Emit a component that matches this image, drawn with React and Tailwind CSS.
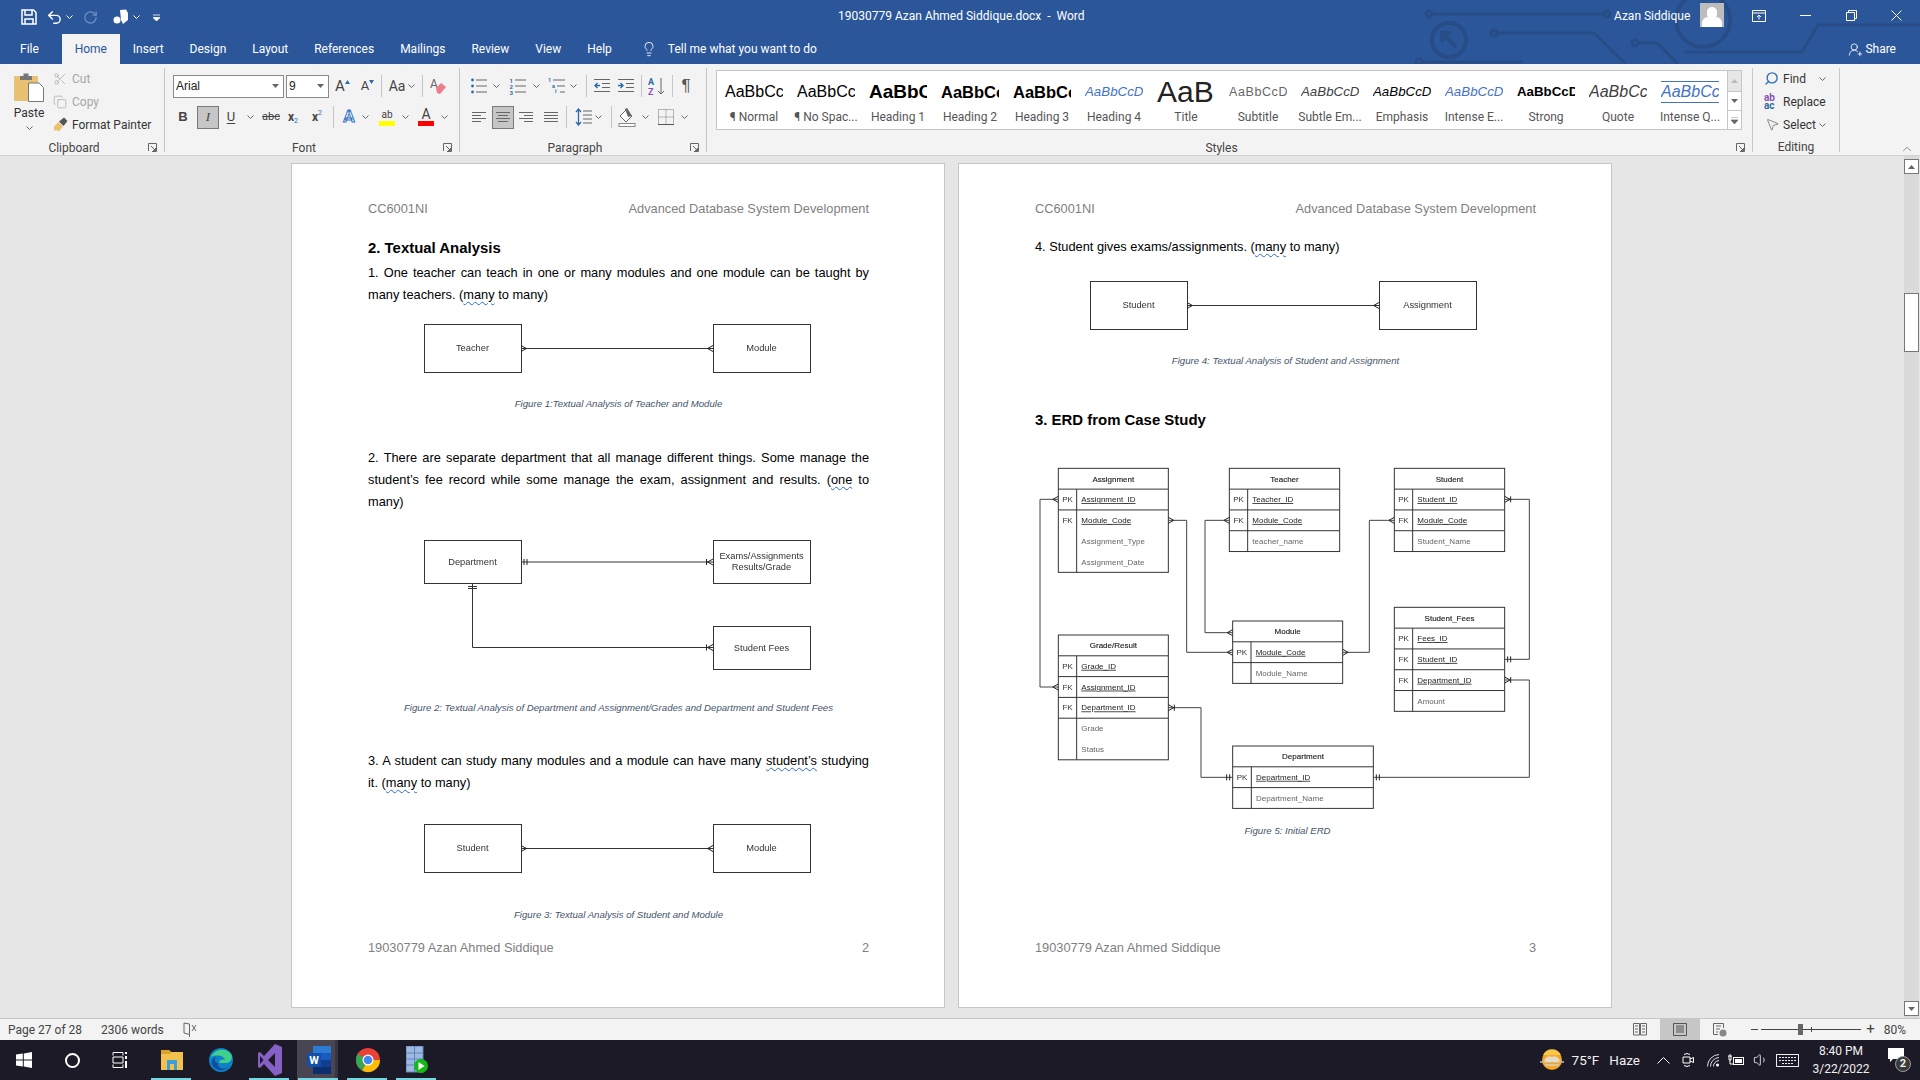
import {
  Copy,
  MousePointer2,
  RotateCw,
  Scissors,
  Search,
  Undo2,
  Lightbulb,
  UserRoundPlus,
  ChevronUp,
  Volume1,
} from "lucide-react";

const TABS = ["Insert", "Design", "Layout", "References", "Mailings", "Review", "View", "Help"];

const STYLES = [
  { label: "¶ Normal", text: "AaBbCc", cls: "text-[16px] text-black" },
  { label: "¶ No Spac...", text: "AaBbCc", cls: "text-[16px] text-black" },
  { label: "Heading 1", text: "AaBbCc", cls: "text-[19px] font-bold text-black" },
  { label: "Heading 2", text: "AaBbCc", cls: "text-[16.5px] font-bold text-black" },
  { label: "Heading 3", text: "AaBbCc", cls: "text-[16.5px] font-bold text-black" },
  { label: "Heading 4", text: "AaBbCcD", cls: "text-[13.3px] italic text-[#4472c4]" },
  { label: "Title", text: "AaB", cls: "text-[30px] text-[#222] leading-[30px]" },
  { label: "Subtitle", text: "AaBbCcD", cls: "text-[12.5px] tracking-[0.6px] text-[#666]" },
  { label: "Subtle Em...", text: "AaBbCcD", cls: "text-[13.3px] italic text-[#404040]" },
  { label: "Emphasis", text: "AaBbCcD", cls: "text-[13.3px] italic text-black" },
  { label: "Intense E...", text: "AaBbCcD", cls: "text-[13.3px] italic text-[#4472c4]" },
  { label: "Strong", text: "AaBbCcD", cls: "text-[13.3px] font-bold text-black" },
  { label: "Quote", text: "AaBbCc", cls: "text-[16px] italic text-[#404040]" },
  {
    label: "Intense Q...",
    text: "AaBbCc",
    cls: "text-[16px] italic text-[#4472c4] border-y border-[#4472c4] leading-[20px]",
  },
];

const ERD_TABLES = [
  {
    name: "Assignment", x: 55, w: 330, y: 55, col: 55,
    rows: [
      ["PK", "Assignment_ID", true],
      ["FK", "Module_Code", false],
      ["", "Assignment_Type", false],
      ["", "Assignment_Date", false],
    ],
  },
  {
    name: "Teacher", x: 568, w: 331, y: 55, col: 55,
    rows: [
      ["PK", "Teacher_ID", true],
      ["FK", "Module_Code", true],
      ["", "teacher_name", false],
    ],
  },
  {
    name: "Student", x: 1063, w: 331, y: 55, col: 55,
    rows: [
      ["PK", "Student_ID", true],
      ["FK", "Module_Code", true],
      ["", "Student_Name", false],
    ],
  },
  {
    name: "Module", x: 578, w: 330, y: 513, col: 55,
    rows: [
      ["PK", "Module_Code", true],
      ["", "Module_Name", false],
    ],
  },
  {
    name: "Student_Fees", x: 1063, w: 331, y: 472, col: 55,
    rows: [
      ["PK", "Fees_ID", true],
      ["FK", "Student_ID", true],
      ["FK", "Department_ID", true],
      ["", "Amount", false],
    ],
  },
  {
    name: "Grade/Result", x: 55, w: 330, y: 555, col: 55,
    rows: [
      ["PK", "Grade_ID", true],
      ["FK", "Assignment_ID", true],
      ["FK", "Department_ID", true],
      ["", "Grade", false],
      ["", "Status", false],
    ],
  },
  {
    name: "Department", x: 578, w: 422, y: 888, col: 56,
    rows: [
      ["PK", "Department_ID", true],
      ["", "Department_Name", false],
    ],
  },
];

const ERD_LINES = [
  "M55 148H0V711H55",
  "M385 211H440V607H578",
  "M568 211H495V548H578",
  "M1063 211H988V607H908",
  "M1394 148H1468V628H1394",
  "M1394 690H1468V982H1000",
  "M385 773H483V982H578",
];

const Chev = ({ className = "" }) => (
  <svg width="7" height="4" viewBox="0 0 7 4" className={className}>
    <path d="M.5.5 3.5 3.5 6.5.5" fill="none" stroke="#666" />
  </svg>
);

const Cell = ({ w, className = "", children }) => (
  <div className={`flex h-full items-center justify-center shrink-0 ${w} ${className}`}>{children}</div>
);

const Sep = ({ className = "" }) => <div className={`w-px h-[22px] bg-[#c6c6c6] shrink-0 ${className}`} />;

const Launcher = () => (
  <svg width="9" height="9" viewBox="0 0 9 9">
    <path d="M.5 8V.5H8.5V8.5H4M3 3 7.5 7.5M7.5 5V7.5H5" fill="none" stroke="#666" />
  </svg>
);

const Bars = ({ lines, color = "#666" }) => (
  <svg width="16" height="14" viewBox="0 0 16 14">
    {lines.map(([x, y, w], i) => (
      <rect key={i} x={x} y={y} width={w} height="1" fill={color} />
    ))}
  </svg>
);

const LEFT_BARS = [[1, 2, 14], [1, 5, 9], [1, 8, 14], [1, 11, 9]];
const CENTER_BARS = [[1, 2, 14], [3, 5, 10], [1, 8, 14], [3, 11, 10]];
const RIGHT_BARS = [[1, 2, 14], [6, 5, 9], [1, 8, 14], [6, 11, 9]];
const FULL_BARS = [[1, 2, 14], [1, 5, 14], [1, 8, 14], [1, 11, 14]];

function BulletIcon({ kind }) {
  return (
    <svg width="18" height="18" viewBox="0 0 18 18">
      {kind === "bullet" && [3, 9, 15].map((y) => <circle key={y} cx="2.5" cy={y} r="1.4" fill="#2b6ca8" />)}
      {kind === "number" &&
        [3, 9, 15].map((y, i) => (
          <text key={y} x="0.5" y={y + 2.5} fontSize="6" fontWeight="700" fill="#2b6ca8" fontFamily="Roboto">
            {i + 1}
          </text>
        ))}
      {kind === "multi" && (
        <>
          <text x="0" y="5" fontSize="5.5" fontWeight="700" fill="#2b6ca8" fontFamily="Roboto">1</text>
          <text x="4" y="10.5" fontSize="5.5" fontWeight="700" fill="#2b6ca8" fontFamily="Roboto">a</text>
          <text x="7" y="16" fontSize="5.5" fontWeight="700" fill="#2b6ca8" fontFamily="Roboto">i</text>
        </>
      )}
      <path d={kind === "multi" ? "M5 3H17M9 9H17M12 15H17" : "M6 3H17M6 9H17M6 15H17"} stroke="#666" />
    </svg>
  );
}

const IndentIcon = ({ dir }) => (
  <svg width="18" height="16" viewBox="0 0 18 16">
    <path d="M1 1.5H17M9 5.5H17M9 9.5H17M1 13.5H17" stroke="#666" />
    <path d={dir === "out" ? "M7 7.5H2M4.5 5 2 7.5 4.5 10" : "M1 7.5H6M3.5 5 6 7.5 3.5 10"} stroke="#2b6ca8" strokeWidth="1.4" fill="none" />
  </svg>
);

const GroupLabel = ({ children, launcher = true }) => (
  <div className="h-[15px] -mb-[3px] flex items-center text-[12px] leading-[14px] text-[#444]">
    <span className="flex-1 text-center">{children}</span>
    <span className="w-4 flex justify-start">{launcher && <Launcher />}</span>
  </div>
);

function ClipboardGroup() {
  return (
    <div className="w-[165px] h-full border-r border-[#c6c6c6] flex flex-col shrink-0">
      <div className="flex flex-1 -mt-px">
        <div className="w-[53px] flex flex-col items-center pl-[5px] pt-[4px]">
          <svg width="30" height="31" viewBox="0 0 30 31">
            <rect x="0" y="5" width="24" height="25" rx="1" fill="#e9c173" />
            <path d="M6 5H9.5V2.5H14.5V5H18V9H6Z" fill="#767676" />
            <path d="M14.5 12H25L29.5 16.5V30.500H14.5Z" fill="#fff" stroke="#777" />
          </svg>
          <span className="mt-[4px] text-[12px] leading-[14px] text-[#333]">Paste</span>
          <Chev className="mt-[6px]" />
        </div>
        <div className="flex flex-col text-[12px]">
          <div className="h-[23px] flex items-center gap-[5px] text-[#a6a6a6]">
            <Scissors size={14} strokeWidth={1.3} color="#aaa" />
            <span>Cut</span>
          </div>
          <div className="h-[23px] flex items-center gap-[5px] text-[#a6a6a6]">
            <Copy size={14} strokeWidth={1.3} color="#aaa" />
            <span>Copy</span>
          </div>
          <div className="h-[23px] flex items-center gap-[4px] text-[#333]">
            <svg width="15" height="15" viewBox="0 0 15 15">
              <path d="M1 9.5 5.5 5 10 9.5 6 14.5 3 13 1 14Z" fill="#e9c173" />
              <path d="M6 4.5 11 .5 14.5 4 10.5 9Z" fill="#555" />
            </svg>
            <span>Format Painter</span>
          </div>
        </div>
      </div>
      <GroupLabel>Clipboard</GroupLabel>
    </div>
  );
}

function FontGroup() {
  return (
    <div className="w-[295px] h-full border-r border-[#c6c6c6] flex flex-col shrink-0">
      <div className="h-6 mt-[6px] flex items-center pl-2">
        <div className="w-[111px] h-[23px] bg-white border border-[#8a8a8a] flex items-center justify-between pl-[2px] pr-[4px] text-[12px] text-[#222] font-['Liberation_Sans',sans-serif]">
          Arial
          <svg width="7" height="4"><path d="M0 0H7L3.5 4Z" fill="#666" /></svg>
        </div>
        <div className="w-[43px] h-[23px] ml-[2px] bg-white border border-[#8a8a8a] flex items-center justify-between pl-[2px] pr-[4px] text-[12px] text-[#222] font-['Liberation_Sans',sans-serif]">
          9
          <svg width="7" height="4"><path d="M0 0H7L3.5 4Z" fill="#666" /></svg>
        </div>
        <Cell w="w-[25px] ml-[1px]">
          <span className="text-[15px] text-[#444]">A</span>
          <svg width="5" height="4" className="mb-2"><path d="M0 4H5L2.5 0Z" fill="#2b6ca8" /></svg>
        </Cell>
        <Cell w="w-[25px]">
          <span className="text-[13px] text-[#444]">A</span>
          <svg width="5" height="4" className="mb-2"><path d="M0 0H5L2.5 4Z" fill="#2b6ca8" /></svg>
        </Cell>
        <Sep className="ml-[1px]" />
        <Cell w="w-[32px] ml-[4px] gap-[3px]">
          <span className="text-[14px] text-[#444]">Aa</span>
          <Chev />
        </Cell>
        <Sep className="ml-[4px]" />
        <Cell w="w-6 ml-[3px]">
          <svg width="17" height="18" viewBox="0 0 17 18">
            <text x="0" y="11" fontSize="12" fill="#666" fontFamily="Roboto">A</text>
            <path d="M6 11 11 6 16 10 10 17 7 16Z" fill="#ee7d8c" />
          </svg>
        </Cell>
      </div>
      <div className="h-6 mt-[7px] flex items-center pl-2 text-[#444]">
        <Cell w="w-5"><span className="text-[13px] font-bold font-['Liberation_Sans',sans-serif]">B</span></Cell>
        <div className="ml-[4px] w-[22px] h-[23px] bg-[#c6c6c6] border border-[#7a7a7a] flex items-center justify-center text-[13px] italic font-['Liberation_Serif',serif]">
          I
        </div>
        <Cell w="w-[18px] ml-[3px]"><span className="text-[13px] underline underline-offset-2">U</span></Cell>
        <Cell w="w-5"><Chev /></Cell>
        <Cell w="w-[22px]"><span className="text-[11px] line-through">abc</span></Cell>
        <Cell w="w-[22px]">
          <span className="text-[12px] font-bold">x</span>
          <span className="text-[7px] text-[#2b6ca8] mt-2">2</span>
        </Cell>
        <Cell w="w-[22px] ml-[2px]">
          <span className="text-[12px] font-bold">x</span>
          <span className="text-[7px] text-[#2b6ca8] mb-2">2</span>
        </Cell>
        <Sep className="ml-[5px]" />
        <Cell w="w-6 ml-[3px]">
          <span className="text-[17px] font-bold text-white [-webkit-text-stroke:1px_#3b78c4]">A</span>
        </Cell>
        <Cell w="w-2"><Chev /></Cell>
        <Cell w="w-6 ml-[6px] flex-col">
          <span className="text-[10px] leading-[12px] text-[#444]">ab</span>
          <div className="w-4 h-[5px] bg-[#ffff00]" />
        </Cell>
        <Cell w="w-3"><Chev /></Cell>
        <Cell w="w-6 ml-[3px] flex-col">
          <span className="text-[14px] leading-[13px] text-[#444]">A</span>
          <div className="w-4 h-[5px] bg-[#ff0000]" />
        </Cell>
        <Cell w="w-3"><Chev /></Cell>
      </div>
      <div className="mt-auto"><GroupLabel>Font</GroupLabel></div>
    </div>
  );
}

function ParagraphGroup() {
  return (
    <div className="w-[247px] h-full border-r border-[#c6c6c6] flex flex-col shrink-0">
      <div className="h-6 mt-[6px] flex items-center pl-[9px]">
        <Cell w="w-5"><BulletIcon kind="bullet" /></Cell>
        <Cell w="w-[14px]"><Chev /></Cell>
        <Cell w="w-5 ml-[5px]"><BulletIcon kind="number" /></Cell>
        <Cell w="w-4"><Chev /></Cell>
        <Cell w="w-5 ml-[3px]"><BulletIcon kind="multi" /></Cell>
        <Cell w="w-3"><Chev /></Cell>
        <Sep className="ml-[7px]" />
        <Cell w="w-5 ml-[5px]"><IndentIcon dir="out" /></Cell>
        <Cell w="w-5 ml-1"><IndentIcon dir="in" /></Cell>
        <Sep className="ml-[5px]" />
        <Cell w="w-5 ml-[5px]">
          <svg width="18" height="20" viewBox="0 0 18 20">
            <text x="0" y="9" fontSize="9" fontWeight="700" fill="#2b6ca8" fontFamily="Roboto">A</text>
            <text x="0" y="19" fontSize="9" fontWeight="700" fill="#8a4fb5" fontFamily="Roboto">Z</text>
            <path d="M13 2V18M10 15 13 18 16 15" stroke="#666" fill="none" />
          </svg>
        </Cell>
        <Sep className="ml-[5px]" />
        <Cell w="w-5 ml-[3px]"><span className="text-[17px] text-[#555] font-['Liberation_Sans',sans-serif]">¶</span></Cell>
      </div>
      <div className="h-6 mt-[7px] flex items-center pl-[9px]">
        <Cell w="w-5"><Bars lines={LEFT_BARS} /></Cell>
        <div className="ml-[3px] w-[22px] h-[23px] bg-[#c6c6c6] border border-[#7a7a7a] flex items-center justify-center">
          <Bars lines={CENTER_BARS} />
        </div>
        <Cell w="w-5 ml-[2px]"><Bars lines={RIGHT_BARS} /></Cell>
        <Cell w="w-5 ml-[5px]"><Bars lines={FULL_BARS} /></Cell>
        <Sep className="ml-[5px]" />
        <Cell w="w-5 ml-[7px]">
          <svg width="18" height="18" viewBox="0 0 18 18">
            <path d="M8 3H17M8 7H17M8 11H17M8 15H17" stroke="#666" />
            <path d="M3.5 1V17M1 4 3.5 1 6 4M1 14 3.5 17 6 14" stroke="#2b6ca8" fill="none" strokeWidth="1.3" />
          </svg>
        </Cell>
        <Cell w="w-2"><Chev /></Cell>
        <Sep className="ml-[9px]" />
        <Cell w="w-5 ml-[5px]">
          <svg width="18" height="19" viewBox="0 0 18 19">
            <path d="M2 8 8 2 14 8 8 14Z" fill="#fff" stroke="#666" />
            <path d="M7 1 9 0 11 3 14 8 10 9Z" fill="#666" />
            <rect x="1" y="15.5" width="16" height="3" fill="#fff" stroke="#888" />
          </svg>
        </Cell>
        <Cell w="w-4"><Chev /></Cell>
        <Cell w="w-5 ml-[3px]">
          <svg width="16" height="16" viewBox="0 0 16 16">
            <path d="M.5.5H15.5V15.500H.5ZM8 .5V15.500M.5 8H15.500" fill="none" stroke="#777" strokeDasharray="1 1" />
            <path d="M0 15.500H16" stroke="#555" />
          </svg>
        </Cell>
        <Cell w="w-4"><Chev /></Cell>
      </div>
      <div className="mt-auto"><GroupLabel>Paragraph</GroupLabel></div>
    </div>
  );
}

function StylesGroup() {
  return (
    <div className="w-[1046px] h-full border-r border-[#c6c6c6] flex flex-col shrink-0">
      <div className="ml-[9px] mt-[2px] w-[1026px] h-[60px] bg-white border border-[#c6c6c6] flex">
        <div className="flex flex-1 pl-px">
          {STYLES.map((s) => (
            <div key={s.label} className="w-[72px] shrink-0 flex flex-col items-center">
              <div className="mt-[3px] h-[36px] w-[58px] overflow-hidden flex items-center justify-start">
                <span className={`shrink-0 whitespace-nowrap font-['Liberation_Sans',sans-serif] ${s.cls}`}>{s.text}</span>
              </div>
              <span className="text-[12px] leading-[14px] text-[#555] whitespace-nowrap">{s.label}</span>
            </div>
          ))}
        </div>
        <div className="w-[14px] flex flex-col border-l border-[#c6c6c6]">
          <div className="h-[21px] bg-[#e6e6e6] flex items-center justify-center border-b border-[#c6c6c6]">
            <svg width="7" height="4"><path d="M0 4H7L3.5 0Z" fill="#bbb" /></svg>
          </div>
          <div className="h-[19px] flex items-center justify-center border-b border-[#c6c6c6]">
            <svg width="7" height="4"><path d="M0 0H7L3.5 4Z" fill="#666" /></svg>
          </div>
          <div className="flex-1 flex items-center justify-center">
            <svg width="7" height="7"><path d="M0 0H7M0 3H7L3.5 7Z" stroke="#666" fill="#666" strokeWidth=".7" /></svg>
          </div>
        </div>
      </div>
      <div className="mt-auto"><GroupLabel>Styles</GroupLabel></div>
    </div>
  );
}

function EditingGroup() {
  return (
    <div className="w-[87px] h-full border-r border-[#c6c6c6] flex flex-col shrink-0 text-[12px] text-[#333]">
      <div className="flex-1 -mt-px pl-[11px]">
        <div className="h-[23px] flex items-center gap-[4px]">
          <Search size={15} strokeWidth={2.2} color="#2f6fb5" className="-scale-x-100" />
          <span>Find</span>
          <Chev className="ml-[9px]" />
        </div>
        <div className="h-[23px] flex items-center gap-[3px]">
          <span className="w-4 text-[10px] leading-[8px] font-bold text-[#2b6ca8]">
            <span className="text-[#8a4fb5]">ab</span>
            <br />
            ac
          </span>
          <span>Replace</span>
        </div>
        <div className="h-[23px] flex items-center gap-[3px]">
          <MousePointer2 size={15} strokeWidth={1.2} color="#666" className="ml-px" />
          <span>Select</span>
          <Chev />
        </div>
      </div>
      <div className="h-[15px] -mb-[3px] text-center leading-[14px] text-[#444]">Editing</div>
    </div>
  );
}

function TitleBar() {
  return (
    <div className="relative h-16 bg-[#2b579a] text-white overflow-hidden shrink-0">
      {/* circuit pattern behind the right end of the title bar */}
      <svg className="absolute inset-0" width="1920" height="64" viewBox="0 0 1920 64">
        <g fill="none" stroke="#274c86" strokeWidth="3">
          <path d="M1432 14H1604M1497 33H1594L1626 64M1638 43H1657L1678 64M1684 52H1802L1818 25H1920M1422 62H1523" />
          <circle cx="1429" cy="14" r="3" />
          <circle cx="1607" cy="14" r="3" />
          <circle cx="1494" cy="33" r="3" />
          <circle cx="1635" cy="43" r="3" />
          <circle cx="1419" cy="62" r="3" />
          <circle cx="1449" cy="40" r="17" strokeWidth="4" />
          <circle cx="1703" cy="20" r="27" strokeWidth="4" />
          <path d="M1442 33 1456 47M1442 42V33H1451" strokeWidth="4" />
        </g>
      </svg>
      <div className="relative h-[34px] flex items-center">
        <div className="pl-[21px] flex items-center">
          <svg width="16" height="16" viewBox="0 0 16 16" className="mr-[5px]">
            <path d="M1 1H12.5L15 3.5V15H1ZM4 1V6H11V1M4 15V10H12V15" fill="none" stroke="#fff" strokeWidth="1.5" />
          </svg>
          <Undo2 size={17} className="ml-[4px]" />
          <Chev className="ml-[3px] [&_path]:stroke-white" />
          <RotateCw size={15} color="#6f8fbf" className="ml-[10px]" />
          <svg width="16" height="16" viewBox="0 0 16 16" className="ml-[15px]">
            <path d="M7 1 13 .5 15 4V11L10 15 8 11Z" fill="#fff" />
            <circle cx="4" cy="11" r="3.5" fill="#fff" />
          </svg>
          <Chev className="ml-[4px] [&_path]:stroke-white" />
          <svg width="7" height="7" viewBox="0 0 7 7" className="ml-[13px]">
            <path d="M0 1H7M0 3.5H7L3.5 7Z" stroke="#fff" fill="#fff" strokeWidth=".8" />
          </svg>
        </div>
        <span className="absolute left-[838px] top-[8px] text-[12px] leading-4 whitespace-pre">
          19030779 Azan Ahmed Siddique.docx  -  Word
        </span>
        <span className="absolute left-[1614px] top-[8px] text-[12px] leading-4">Azan Siddique</span>
        <div className="absolute left-[1700px] top-[3px] w-6 h-6 bg-[#bdbdbd] flex flex-col items-center justify-end overflow-hidden">
          <div className="w-[10px] h-[12px] rounded-full bg-white mb-[-2px]" />
          <div className="w-[20px] h-[10px] rounded-t-md bg-white" />
        </div>
        <svg width="14" height="12" viewBox="0 0 14 12" className="absolute left-[1752px] top-[10px]">
          <path d="M.5.5H13.5V11.5H.5ZM.5 3H13.5M7 9.5V5M5 7 7 5 9 7" fill="none" stroke="#fff" />
        </svg>
        <div className="absolute left-[1800px] top-[15px] w-[11px] h-px bg-white" />
        <svg width="11" height="11" viewBox="0 0 11 11" className="absolute left-[1846px] top-[10px]">
          <path d="M.5 2.5H8.5V10.5H.5ZM2.5 2.5V.5H10.5V8.5H8.5" fill="none" stroke="#fff" />
        </svg>
        <svg width="11" height="11" viewBox="0 0 11 11" className="absolute left-[1891px] top-[10px]">
          <path d="M.5.5 10.5 10.5M10.5.5 .5 10.5" fill="none" stroke="#fff" />
        </svg>
      </div>
      <div className="relative h-[30px] flex items-center text-[12px]">
        <span className="ml-[20px] mr-[23px] leading-[30px]">File</span>
        <span className="w-[58px] h-[30px] bg-[#f3f3f3] text-[#2b579a] flex items-center justify-center">Home</span>
        {TABS.map((t) => (
          <span key={t} className="px-[13px]">{t}</span>
        ))}
        <Lightbulb size={16} strokeWidth={1.3} className="ml-[16px]" />
        <span className="ml-[11px]">Tell me what you want to do</span>
        <div className="ml-auto mr-[24px] flex items-center gap-[2px]">
          <UserRoundPlus size={15} strokeWidth={1.3} />
          <span>Share</span>
        </div>
      </div>
    </div>
  );
}

function Ribbon() {
  return (
    <div className="relative h-[92px] bg-[#f3f3f3] border-b border-[#d2d2d2] flex shrink-0 pt-1 pb-[3px]">
      <ClipboardGroup />
      <FontGroup />
      <ParagraphGroup />
      <StylesGroup />
      <EditingGroup />
      <ChevronUp size={14} strokeWidth={1} color="#444" className="absolute left-[1900px] top-[78px]" />
    </div>
  );
}

// --- document pages ---

const Crow = ({ x, y, d, s = 1 }) => (
  <path d={`M${x} ${y - 3 * s}L${x + 5.5 * d * s} ${y}L${x} ${y + 3 * s}`} fill="none" stroke="#222" strokeWidth={s} />
);

const Tick = ({ x, y, d, at, s = 1 }) => (
  <path d={`M${x + at * d * s} ${y - 3 * s}V${y + 3 * s}`} stroke="#222" strokeWidth={s} />
);

const OneBar = ({ x, y, d, s = 1 }) => (
  <>
    <Tick x={x} y={y} d={d} at={3} s={s} />
    <Tick x={x} y={y} d={d} at={6} s={s} />
  </>
);

function DiagramBox({ x, y, w = 97, h = 48, lines }) {
  return (
    <g>
      <rect x={x + 0.5} y={y + 0.5} width={w} height={h} fill="#fff" stroke="#333" />
      {lines.map((t, i) => (
        <text
          key={t}
          x={x + w / 2}
          y={y + h / 2 + 3 - (lines.length - 1) * 5.5 + i * 11}
          fontSize="9.3"
          textAnchor="middle"
          fill="#333"
        >
          {t}
        </text>
      ))}
    </g>
  );
}

function SimpleDiagram({ left, right, x1, x2, y = 9, className }) {
  const w = x2 - x1 - 97;
  return (
    <svg width="501" height="65" viewBox="0 0 501 65" className={`blur-[0.3px] font-['Liberation_Sans',sans-serif] ${className}`}>
      <DiagramBox x={x1} y={y} lines={[left]} />
      <DiagramBox x={x2} y={y} lines={[right]} />
      <path d={`M${x1 + 97} ${y + 24.5}H${x1 + 97 + w}`} stroke="#333" />
      <Crow x={x1 + 97} y={y + 24.5} d={1} />
      <Crow x={x2} y={y + 24.5} d={-1} />
    </svg>
  );
}

function DepartmentDiagram() {
  return (
    <svg width="501" height="150" viewBox="0 0 501 150" className="mt-[17px] blur-[0.3px] font-['Liberation_Sans',sans-serif]">
      <DiagramBox x={56} y={10} h={43} lines={["Department"]} />
      <DiagramBox x={345} y={10} h={43} lines={["Exams/Assignments", "Results/Grade"]} />
      <DiagramBox x={345} y={96} h={43} lines={["Student Fees"]} />
      <path d="M153 32H345M104.500 53V117.500H345" fill="none" stroke="#333" />
      <OneBar x={153} y={32} d={1} />
      <Crow x={345} y={32} d={-1} />
      <Tick x={345} y={32} d={-1} at={6.5} />
      <Crow x={345} y={117.5} d={-1} />
      <Tick x={345} y={117.5} d={-1} at={6.5} />
      <path d="M100 56.500H109M100 58.500H109" stroke="#333" />
    </svg>
  );
}

function ErdTable({ t }) {
  const rowH = 62.4;
  const total = rowH * (t.rows.length + 1);
  return (
    <g>
      <rect x={t.x} y={t.y} width={t.w} height={total} fill="#fff" stroke="#333" strokeWidth="3" />
      <text x={t.x + t.w / 2} y={t.y + 40} fontSize="24" textAnchor="middle" fill="#222" stroke="#222" strokeWidth=".4">
        {t.name}
      </text>
      <path d={`M${t.x + t.col} ${t.y + rowH}V${t.y + total}`} stroke="#333" strokeWidth="3" />
      {t.rows.map(([key, name, line], i) => {
        const top = t.y + rowH * (i + 1);
        const keyed = key !== "";
        return (
          <g key={name}>
            {(i === 0 || t.rows[i - 1][2]) && <path d={`M${t.x} ${top}H${t.x + t.w}`} stroke="#333" strokeWidth="3" />}
            <text x={t.x + t.col / 2} y={top + 39} fontSize="24" textAnchor="middle" fill="#333">
              {key}
            </text>
            <text
              x={t.x + t.col + 14}
              y={top + 39}
              fontSize="24"
              fill={keyed ? "#222" : "#666"}
              textDecoration={keyed ? "underline" : "none"}
            >
              {name}
            </text>
          </g>
        );
      })}
    </g>
  );
}

function Erd() {
  return (
    <svg
      width="500"
      height="365"
      viewBox="-3 0 1500 1095"
      className="mt-5 ml-1 blur-[0.3px] font-['Liberation_Sans',sans-serif]"
    >
      {ERD_LINES.map((d) => (
        <path key={d} d={d} fill="none" stroke="#444" strokeWidth="3" />
      ))}
      {ERD_TABLES.map((t) => (
        <ErdTable key={t.name} t={t} />
      ))}
      <Crow x={55} y={148} d={-1} s={3} />
      <Crow x={55} y={711} d={-1} s={3} />
      <Crow x={385} y={211} d={1} s={3} />
      <Crow x={578} y={607} d={-1} s={3} />
      <Crow x={568} y={211} d={-1} s={3} />
      <Crow x={578} y={548} d={-1} s={3} />
      <Crow x={1063} y={211} d={-1} s={3} />
      <Crow x={908} y={607} d={1} s={3} />
      <Crow x={1394} y={148} d={1} s={3} />
      <Tick x={1394} y={148} d={1} at={6} s={3} />
      <OneBar x={1394} y={628} d={1} s={3} />
      <Crow x={1394} y={690} d={1} s={3} />
      <Tick x={1394} y={690} d={1} at={6} s={3} />
      <OneBar x={1000} y={982} d={1} s={3} />
      <Crow x={385} y={773} d={1} s={3} />
      <Tick x={385} y={773} d={1} at={6} s={3} />
      <OneBar x={578} y={982} d={-1} s={3} />
    </svg>
  );
}

const Caption = ({ className = "", children }) => (
  <p className={`text-center text-[9.65px] leading-[14px] italic text-[#44546a] ${className}`}>{children}</p>
);

const Squiggle = ({ children }) => (
  <span className="underline decoration-wavy decoration-[#2b6cd4] decoration-1 underline-offset-2">{children}</span>
);

const Para = ({ className = "", children }) => (
  <p className={`text-[12.8px] leading-[22px] text-justify text-black ${className}`}>{children}</p>
);

function Page({ number, children }) {
  return (
    <div className="w-[654px] h-[845px] bg-white border border-[#c6c6c6] pl-[76px] pr-[75px] pt-[37px] shrink-0 font-['Liberation_Sans',sans-serif]">
      <div className="flex justify-between h-4 text-[12.8px] leading-4 text-[#7f7f7f]">
        <span>CC6001NI</span>
        <span>Advanced Database System Development</span>
      </div>
      <div className="h-[723px] flow-root">{children}</div>
      <div className="flex justify-between h-4 text-[12.8px] leading-4 text-[#7f7f7f]">
        <span>19030779 Azan Ahmed Siddique</span>
        <span>{number}</span>
      </div>
    </div>
  );
}

function Scrollbar() {
  return (
    <div className="ml-auto mr-px w-[15px] h-full bg-[#dadada] flex flex-col">
      <div className="mt-[3px] h-[15px] bg-white border border-[#777] flex items-center justify-center">
        <svg width="7" height="4"><path d="M0 4H7L3.5 0Z" fill="#666" /></svg>
      </div>
      <div className="mt-[119px] h-[59px] bg-white border border-[#777]" />
      <div className="mt-auto mb-[2px] h-[15px] bg-white border border-[#777] flex items-center justify-center">
        <svg width="7" height="4"><path d="M0 0H7L3.5 4Z" fill="#666" /></svg>
      </div>
    </div>
  );
}

function Document() {
  return (
    <div className="flex-1 min-h-0 bg-[#e6e6e6] flex pl-[291px] overflow-hidden">
      <div className="pt-[7px] flex gap-[13px]">
        <Page number="2">
          <h2 className="mt-[21px] text-[14.93px] leading-5 font-bold text-black">2. Textual Analysis</h2>
          <Para className="mt-[4px]">
            1. One teacher can teach in one or many modules and one module can be taught by many teachers.{" "}
            (<Squiggle>many</Squiggle> to many)
          </Para>
          <SimpleDiagram left="Teacher" right="Module" x1={56} x2={345} y={9} className="mt-[9px]" />
          <Caption className="mt-[17px]">Figure 1:Textual Analysis of Teacher and Module</Caption>
          <Para className="mt-[36px]">
            2. There are separate department that all manage different things. Some manage the student’s fee record
            while some manage the exam, assignment and results. (<Squiggle>one</Squiggle> to many)
          </Para>
          <DepartmentDiagram />
          <Caption className="mt-[21px]">
            Figure 2: Textual Analysis of Department and Assignment/Grades and Department and Student Fees
          </Caption>
          <Para className="mt-[35px]">
            3. A student can study many modules and a module can have many <Squiggle>student’s</Squiggle> studying it.{" "}
            (<Squiggle>many</Squiggle> to many)
          </Para>
          <SimpleDiagram left="Student" right="Module" x1={56} x2={345} y={9} className="mt-[21px]" />
          <Caption className="mt-[28px]">Figure 3: Textual Analysis of Student and Module</Caption>
        </Page>
        <Page number="3">
          <Para className="mt-[19px]">
            4. Student gives exams/assignments. (<Squiggle>many</Squiggle> to many)
          </Para>
          <SimpleDiagram left="Student" right="Assignment" x1={55} x2={344} y={11} className="mt-3" />
          <Caption className="mt-[19px]">Figure 4: Textual Analysis of Student and Assignment</Caption>
          <h2 className="mt-[42px] text-[14.93px] leading-5 font-bold text-black">3. ERD from Case Study</h2>
          <Erd />
          <Caption className="mt-[9px] ml-[4px]">Figure 5: Initial ERD</Caption>
        </Page>
      </div>
      <Scrollbar />
    </div>
  );
}

function StatusBar() {
  return (
    <div className="h-[22px] bg-[#f3f3f3] border-t border-[#c6c6c6] flex items-center text-[12px] text-[#444] shrink-0">
      <span className="ml-2">Page 27 of 28</span>
      <span className="ml-[19px]">2306 words</span>
      <svg width="14" height="15" viewBox="0 0 14 15" className="ml-[19px]">
        <path d="M6.500 2 1 1V11L6.500 12.500V2ZM6.500 12.500V15" fill="none" stroke="#666" />
        <path d="M9 3 13 9M13 3 9 9" stroke="#666" />
      </svg>
      <div className="ml-auto flex h-full items-center">
        <svg width="14" height="13" viewBox="0 0 14 13" className="mr-[13px]">
          <path d="M.5.5H6.500V12H.5ZM7.500.5H13.500V12H7.500ZM2 3H5M2 6H5M2 9H5M9 3H12M9 6H12M9 9H12" fill="none" stroke="#666" />
        </svg>
        <div className="w-10 h-full bg-[#c6c6c6] flex items-center justify-center">
          <svg width="14" height="13" viewBox="0 0 14 13">
            <path d="M.5.5H13.500V12.500H.5ZM3 3H11M3 5H11M3 7H11M3 9H11" fill="none" stroke="#555" />
          </svg>
        </div>
        <svg width="14" height="14" viewBox="0 0 14 14" className="ml-[13px]">
          <path d="M.5.5H10.500V5M.5.5V11.500H5M3 3H8M3 6H7M3 9H5" fill="none" stroke="#666" />
          <circle cx="10" cy="10" r="3.500" fill="#888" />
        </svg>
        <div className="ml-[24px] w-[7px] h-px bg-[#444]" />
        <div className="relative ml-[3px] w-[100px] h-px bg-[#444]">
          <div className="absolute left-[37px] -top-[5px] w-[5px] h-[11px] bg-[#666]" />
          <div className="absolute left-[50px] -top-[2px] w-px h-[5px] bg-[#444]" />
        </div>
        <span className="ml-[5px] text-[15px] leading-none">+</span>
        <span className="ml-[9px] mr-[14px]">80%</span>
      </div>
    </div>
  );
}

const TaskIcon = ({ active, running, children }) => (
  <div className="relative w-[49px] h-full flex items-center justify-center">
    {active && <div className="absolute inset-y-0 left-[3px] right-[5px] bg-[#4a4552] border-r-[3px] border-[#3a3542]" />}
    <div className="relative">{children}</div>
    {running && <div className="absolute bottom-0 left-[4px] right-[5px] h-[2px] bg-[#76d7e0]" />}
  </div>
);

function Taskbar() {
  return (
    <div className="h-10 bg-[#1d1a27] flex items-center text-white shrink-0">
      <div className="w-[48px] h-full flex items-center justify-center">
        <svg width="16" height="16" viewBox="0 0 16 16">
          <path d="M0 2.500 6.800 1.500V7.500H0ZM7.800 1.400 16 0V7.500H7.800ZM0 8.500H6.800V14.500L0 13.500ZM7.800 8.500H16V16L7.800 14.600Z" fill="#fff" />
        </svg>
      </div>
      <div className="w-[48px] h-full flex items-center justify-center">
        <div className="w-[15px] h-[15px] rounded-full border-2 border-white" />
      </div>
      <div className="w-[48px] h-full flex items-center justify-center">
        <svg width="16" height="16" viewBox="0 0 16 16">
          <path d="M1 3.500V.5H11V3.500M1 12.500V15.500H11V12.500M1 5H11V11H1Z" fill="none" stroke="#fff" />
          <rect x="13" y="4" width="2" height="3" fill="#fff" />
          <rect x="13" y="0" width="2" height="2" fill="#fff" />
          <rect x="13" y="9" width="2" height="7" fill="#fff" />
        </svg>
      </div>
      <div className="ml-[3px] flex h-full">
        <TaskIcon running>
          <svg width="22" height="22" viewBox="0 0 22 22">
            <path d="M0 1H8L10 3H22V21H0Z" fill="#f2c14e" />
            <path d="M0 1H8L10 3V5H0Z" fill="#d9a22f" />
            <path d="M6 11H16V21H13V15H9V21H6Z" fill="#3aa0dc" />
          </svg>
        </TaskIcon>
        <TaskIcon>
          <svg width="24" height="24" viewBox="0 0 24 24">
            <circle cx="12" cy="12" r="12" fill="#0f7fc8" />
            <path d="M2 9C5 1 17-1 22 6 24 10 22 15 17 15H10C10 11 15 11 16 12 15 8 9 6 2 9Z" fill="#3fd18a" />
            <path d="M9 15C8 19 13 23 20 19 15 24 5 23 3 16 2 13 4 10 7 9 5 12 6 15 9 15Z" fill="#0b4f9e" />
          </svg>
        </TaskIcon>
        <TaskIcon running>
          <svg width="24" height="32" viewBox="0 0 24 32">
            <path d="M17 0 24 3V29L17 32 6 20 2 24 0 23V9L2 8 6 12Z" fill="#8661c5" />
            <path d="M17 9V23L10 16ZM2 12V20L5.500 16Z" fill="#1d1a27" />
          </svg>
        </TaskIcon>
        <TaskIcon active running>
          <svg width="24" height="28" viewBox="0 0 24 28">
            <rect x="6" y="0" width="18" height="28" rx="1" fill="#2b7cd3" />
            <rect x="6" y="7" width="18" height="7" fill="#185abd" />
            <rect x="6" y="14" width="18" height="7" fill="#103f91" />
            <rect x="6" y="21" width="18" height="7" fill="#0b2e6f" />
            <rect x="0" y="7" width="14" height="14" rx="1" fill="#124fa8" />
            <text x="7" y="18" textAnchor="middle" fontSize="11" fontWeight="700" fill="#fff" fontFamily="Roboto">W</text>
          </svg>
        </TaskIcon>
        <TaskIcon running>
          <svg width="24" height="30" viewBox="0 0 24 24">
            <circle cx="12" cy="12" r="12" fill="#e94235" />
            <path d="M12 12 1.600 18A12 12 0 0 1 1.600 6Z" fill="#34a853" />
            <path d="M12 12H24A12 12 0 0 1 6 22.400Z" fill="#fbbc04" />
            <path d="M12 12 6 22.400A12 12 0 0 1 1.600 18Z" fill="#34a853" />
            <circle cx="12" cy="12" r="5.500" fill="#fff" />
            <circle cx="12" cy="12" r="4.300" fill="#4285f4" />
          </svg>
        </TaskIcon>
        <TaskIcon running>
          <svg width="22" height="28" viewBox="0 0 22 28">
            <rect x="0" y="0" width="17" height="26" fill="#9db9e0" stroke="#5c84bd" />
            <path d="M0 7H17M0 13H17M0 19H17M8.500 0V26" stroke="#5c84bd" />
            <circle cx="15" cy="20" r="7" fill="#16b916" />
            <path d="M12.500 16 18.500 20 12.500 24Z" fill="#fff" />
          </svg>
        </TaskIcon>
      </div>
      <div className="ml-auto flex h-full items-center text-[13.5px] text-[#f0f0f0]">
        <svg width="24" height="22" viewBox="0 0 24 22" className="mr-[8px]">
          <circle cx="12" cy="11" r="10" fill="#f7a823" />
          <path d="M3 6A10 10 0 0 1 21 6Z" fill="#f9c54a" />
          <path d="M0 13H24" stroke="#c9bfae" strokeWidth="1.5" />
          <path d="M5 10Q8 6 12 8 16 6 19 10 21 12 18 13H6Q3 12 5 10Z" fill="#e4dccd" />
          <path d="M5 16H19" stroke="#d8cfc0" strokeWidth="1.500" />
        </svg>
        <span>75°F</span>
        <span className="ml-[10px]">Haze</span>
        <svg width="13" height="7" viewBox="0 0 13 7" className="ml-[17px]">
          <path d="M.5 6.500 6.500.5 12.500 6.500" fill="none" stroke="#fff" />
        </svg>
        <svg width="12" height="16" viewBox="0 0 12 16" className="ml-[12px]">
          <path d="M1 5H8V11H1ZM8 7 11.500 5.500V10.500L8 9M2 2.500Q5 .5 8 2.500M2 13.500Q5 15.500 8 13.500" fill="none" stroke="#fff" />
        </svg>
        <svg width="13" height="13" viewBox="0 0 13 13" className="ml-[13px]">
          <path d="M.5 12.500A12 12 0 0 1 12 .5M3.500 12.500A9 9 0 0 1 12 3.500M6.500 12.500A6 6 0 0 1 12 6.500" fill="none" stroke="#ddd" />
          <circle cx="10.500" cy="11" r="1.500" fill="#fff" />
        </svg>
        <svg width="16" height="12" viewBox="0 0 16 12" className="ml-[8px]">
          <path d="M0 2H4M2 0V2M1 2V6H3V2M2 6V10H5" fill="none" stroke="#fff" />
          <rect x="5.500" y="3.500" width="10" height="7" fill="#1d1a27" stroke="#fff" />
          <rect x="7" y="5" width="7" height="4" fill="#fff" />
        </svg>
        <Volume1 size={16} strokeWidth={1.3} className="ml-[9px]" />
        <svg width="23" height="13" viewBox="0 0 23 13" className="ml-[7px]">
          <path d="M.5.5H22.500V12.500H.5ZM3 3.500H20M3 6.500H20M6 9.500H17" fill="none" stroke="#eee" strokeDasharray="2 1" />
          <path d="M.5.5H22.500V12.500H.5Z" fill="none" stroke="#eee" />
        </svg>
        <div className="ml-[9px] w-[66px] flex flex-col items-center text-[12px] leading-[18px]">
          <span>8:40 PM</span>
          <span>3/22/2022</span>
        </div>
        <div className="relative ml-[14px] mr-[8px] w-[24px] h-[24px]">
          <svg width="16" height="15" viewBox="0 0 16 15" className="absolute left-0 top-0">
            <path d="M0 0H16V11H5L2 14V11H0Z" fill="#fff" />
          </svg>
          <span className="absolute left-[7px] top-[8px] w-4 h-4 rounded-full bg-[#3a3a3a] border border-[#999] text-[11px] leading-[14px] text-center font-bold">
            2
          </span>
        </div>
      </div>
    </div>
  );
}

export default function App() {
  return (
    <div className="w-[1920px] h-[1080px] flex flex-col overflow-hidden font-['Roboto',sans-serif]">
      <TitleBar />
      <Ribbon />
      <Document />
      <StatusBar />
      <Taskbar />
    </div>
  );
}
